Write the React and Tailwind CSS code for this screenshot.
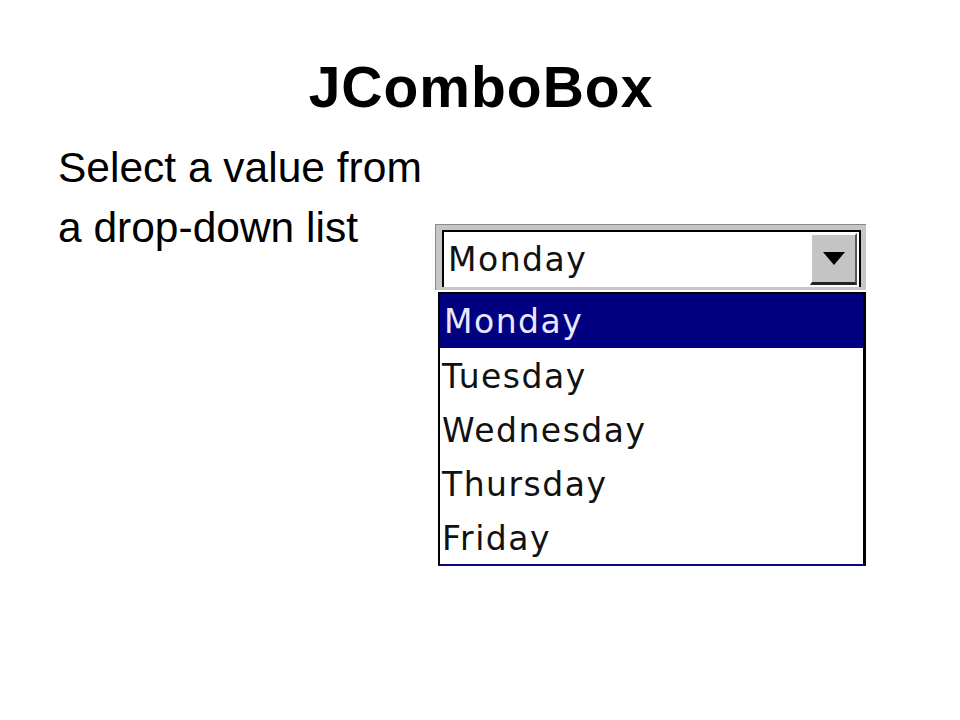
import React from "react";

const items = ["Monday", "Tuesday", "Wednesday", "Thursday", "Friday"];

export default function App() {
  const uiFont = { fontFamily: '"DejaVu Sans", Verdana, sans-serif' };
  return (
    <div
      className="w-[960px] h-[720px] bg-white overflow-hidden text-black"
      style={{ fontFamily: '"Liberation Sans", Arial, sans-serif' }}
    >
      <h1 className="pt-[59px] text-center text-[57px] leading-none font-bold tracking-[1px] pl-[2px]">
        JComboBox
      </h1>
      <div className="flex mt-[22px]">
        <div className="w-[435px] pl-[58px] text-[42.5px] leading-[60px]">
          Select a value from
          <br />
          a drop-down list
        </div>
        <div className="mt-[86px] w-[431px]">
          {/* combo field */}
          <div className="h-[66px] bg-[#c6c6c6] border-t border-l border-[#8a8a8a] pt-[5px] pl-[6px] pr-[5px] pb-[3px]">
            <div className="h-full bg-white border-t-2 border-l-2 border-r-2 border-black flex items-start justify-between">
              <div
                className="h-[56px] flex items-center pl-[4px] text-[33px] tracking-[1.5px] text-[#111]"
                style={uiFont}
              >
                Monday
              </div>
              <div className="mt-[1px] mr-[2px] w-[47px] h-[52px] bg-[#c4c4c4] border-t-2 border-l-2 border-white border-b-[3px] border-r-2 border-b-[#222] border-r-[#555] flex items-center justify-center">
                <svg width="22" height="13" viewBox="0 0 22 13">
                  <polygon points="0,0 22,0 11,13" fill="#000" />
                </svg>
              </div>
            </div>
          </div>
          {/* list */}
          <div className="ml-[3px] mt-[2px] w-[428px] border-l-2 border-t-2 border-r-[3px] border-b-2 border-black border-b-[#0a0a80] bg-white">
            {items.map((it, i) => (
              <div
                key={it}
                className={
                  i === 0
                    ? "h-[54px] flex items-center pt-[2px] pl-[4px] bg-[#000080] text-[#e8e8ff] text-[33px] tracking-[1.5px]"
                    : "h-[54px] flex items-center pt-[3px] pl-[2px] text-[#111] text-[33px] tracking-[1.5px]"
                }
                style={uiFont}
              >
                {it}
              </div>
            ))}
          </div>
        </div>
      </div>
    </div>
  );
}
